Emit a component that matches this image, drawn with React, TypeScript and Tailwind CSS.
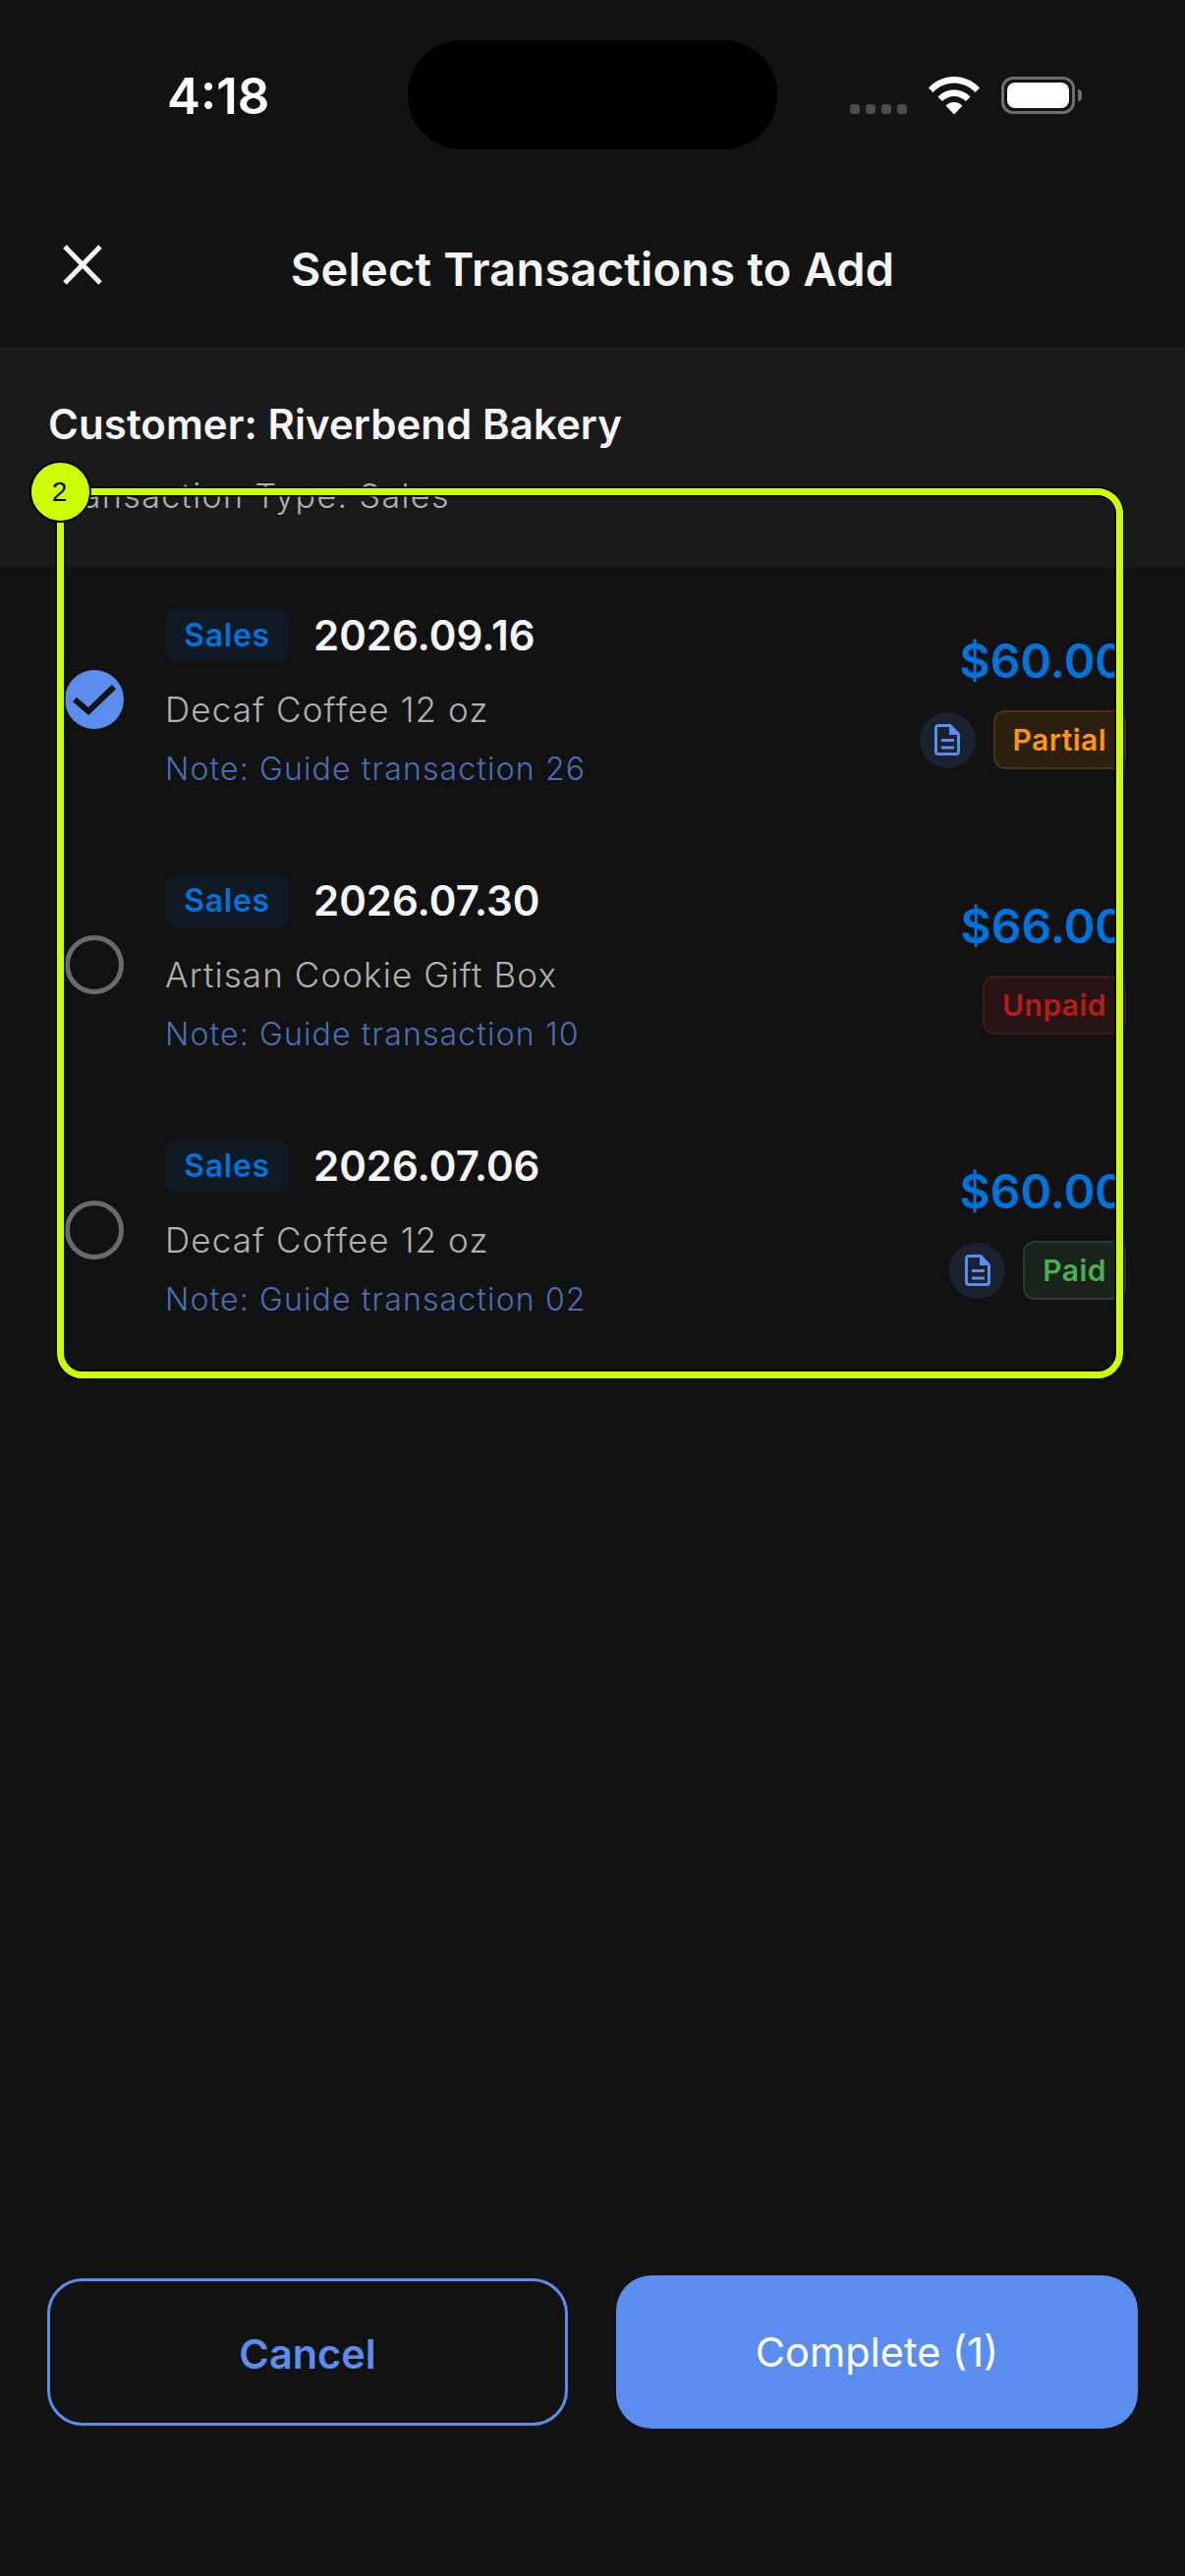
import React from "react";

const DocIcon = () => (
  <svg width="26" height="32" viewBox="0 0 26 32">
    <path d="M4 1.5H16L24.5 10.5V28A2.5 2.5 0 0 1 22 30.5H4A2.5 2.5 0 0 1 1.5 28V4A2.5 2.5 0 0 1 4 1.5Z" fill="none" stroke="#5b8def" strokeWidth="3" strokeLinejoin="round" />
    <path d="M15 1.5L24.5 11H15Z" fill="#5b8def" />
    <path d="M7 16.5H20M7 24H20" stroke="#5b8def" strokeWidth="3" />
  </svg>
);

type Row = {
  date: string;
  item: string;
  note: string;
  amount: string;
  selected?: boolean;
  doc?: boolean;
  status: string;
  statusClass: string;
};

const rows: Row[] = [
  {
    date: "2026.09.16",
    item: "Decaf Coffee 12 oz",
    note: "Note: Guide transaction 26",
    amount: "$60.00",
    selected: true,
    doc: true,
    status: "Partial",
    statusClass: "bg-[#2d2010] border-[#4a3314] text-[#ff9800]",
  },
  {
    date: "2026.07.30",
    item: "Artisan Cookie Gift Box",
    note: "Note: Guide transaction 10",
    amount: "$66.00",
    status: "Unpaid",
    statusClass: "bg-[#271414] border-[#401818] text-[#b71c1c]",
  },
  {
    date: "2026.07.06",
    item: "Decaf Coffee 12 oz",
    note: "Note: Guide transaction 02",
    amount: "$60.00",
    doc: true,
    status: "Paid",
    statusClass: "bg-[#1a241a] border-[#263d27] text-[#4caf50]",
  },
];

function TransactionRow({ r }: { r: Row }) {
  return (
    <div className="h-[270px] flex items-center pl-[66px] pr-[60px]">
      {r.selected ? (
        <div className="w-[60px] h-[60px] rounded-full bg-[#5b8def] flex items-center justify-center shrink-0">
          <svg width="60" height="60" viewBox="0 0 60 60">
            <path d="M10 30L24 42L50 17" fill="none" stroke="#121212" strokeWidth="6" />
          </svg>
        </div>
      ) : (
        <div className="w-[60px] h-[60px] rounded-full border-[5px] border-[#6b6b6b] shrink-0" />
      )}
      <div className="ml-[42px] flex flex-col flex-1 pb-[3px]">
        <div className="flex items-center gap-[25px] h-[54px]">
          <span className="h-[54px] w-[126px] rounded-[12px] bg-[#0f1a24] flex items-center justify-center text-[#0073dd] text-[32px] font-semibold tracking-[0.7px]">
            Sales
          </span>
          <span className="text-[42px] font-semibold text-[#f5f5f5] leading-[54px]">{r.date}</span>
        </div>
        <div className="mt-[24px] text-[35px] leading-[48px] font-light text-[#b0b0b0] tracking-[1.1px]">{r.item}</div>
        <div className="mt-[19px] text-[32px] leading-[36px] font-light text-[#4a6fb5] tracking-[1.15px]">{r.note}</div>
      </div>
      <div className="flex flex-col items-end pt-[2px]">
        <div className="text-[48px] leading-[60px] font-semibold text-[#0073dd]">{r.amount}</div>
        <div className="mt-[20px] flex items-center gap-[18px]">
          {r.doc && (
            <div className="w-[57px] h-[57px] rounded-full bg-[#1a2230] flex items-center justify-center">
              <DocIcon />
            </div>
          )}
          <div className={`h-[60px] px-[18px] rounded-[12px] border-2 flex items-center text-[30px] font-semibold tracking-[0.45px] ${r.statusClass}`}>
            {r.status}
          </div>
        </div>
      </div>
    </div>
  );
}

export default function App() {
  return (
    <div className="relative w-[1206px] h-[2622px] bg-[#121212] flex flex-col overflow-hidden font-['Inter',sans-serif]">
      {/* status bar */}
      <div className="h-[200px] shrink-0 flex items-start">
        <div className="ml-[170px] mt-[68px] text-[51px] leading-[60px] font-semibold text-white w-[245px]">4:18</div>
        <div className="mt-[41px] w-[376px] h-[111px] rounded-[55px] bg-black" />
        <div className="ml-[74px] mt-[78px] h-[38px] flex items-end gap-[6px]">
          {[0, 1, 2, 3].map((i) => (
            <div key={i} className="w-[10px] h-[10px] rounded-[3px] bg-[#4d4d4d]" />
          ))}
        </div>
        <svg className="ml-[22px] mt-[78px]" width="52" height="39" viewBox="0 0 52 39">
          <path d="M26 0C36 0 45 4 52 11.5L47.5 16C41.5 10 34 6.5 26 6.5S10.5 10 4.5 16L0 11.5C7 4 16 0 26 0Z" fill="#fff" />
          <path d="M26 13.5C32.5 13.5 38 16 42.5 20.5L38 25C35 22 30.5 20 26 20S17 22 14 25L9.5 20.5C14 16 19.5 13.5 26 13.5Z" fill="#fff" />
          <path d="M26 26C29 26 32 27 34.5 29.5L26 38.5L17.5 29.5C20 27 23 26 26 26Z" fill="#fff" />
        </svg>
        <div className="ml-[22px] mt-[78px] flex items-center">
          <div className="w-[75px] h-[38px] rounded-[12px] border-[3px] border-[#6e6e6e] p-[3px]">
            <div className="w-full h-full rounded-[8px] bg-white" />
          </div>
          <div className="ml-[3px] w-[4px] h-[12px] rounded-r-[4px] bg-[#6e6e6e]" />
        </div>
      </div>

      {/* header */}
      <div className="h-[153px] shrink-0 relative flex items-center justify-center pb-[6px]">
        <svg className="absolute left-[63px] top-[48px]" width="42" height="43" viewBox="0 0 42 43">
          <path d="M3 3L39 40M39 3L3 40" stroke="#f5f5f5" strokeWidth="5" />
        </svg>
        <div className="text-[47px] font-semibold text-[#f5f5f5] leading-[56px] tracking-[0.2px]">Select Transactions to Add</div>
      </div>

      {/* customer panel */}
      <div className="h-[224px] shrink-0 bg-[#1a1a1a] pl-[49px] pt-[55px]">
        <div className="text-[42px] leading-[48px] font-semibold text-[#f5f5f5] tracking-[0.05px]">Customer: Riverbend Bakery</div>
        <div className="mt-[29px] text-[34px] leading-[40px] font-light text-[#b0b0b0] tracking-[1.4px]">Transaction Type: Sales</div>
      </div>

      {/* list */}
      <div className="flex-1">
        {rows.map((r) => (
          <TransactionRow key={r.date} r={r} />
        ))}
      </div>

      {/* footer */}
      <div className="h-[306px] shrink-0 pl-[48px] pr-[48px] pb-[150px] flex items-center gap-[49px]">
        <button className="w-[530px] h-[150px] rounded-[36px] border-[3px] border-[#5b8def] text-[#5b8def] text-[41.5px] font-semibold pt-[5px]">
          Cancel
        </button>
        <button className="w-[531px] h-[156px] rounded-[36px] bg-[#5b8def] text-white text-[41.5px] font-normal">
          Complete (1)
        </button>
      </div>

      {/* annotation overlay */}
      <div className="absolute left-[58px] top-[497px] w-[1085px] h-[906px] rounded-[26px] border-[7px] border-[#ccff00] shadow-[0_0_0_1.5px_#000,inset_0_0_0_1.5px_#000]" />
      <div className="absolute left-[30px] top-[469px] w-[63px] h-[63px] rounded-full bg-[#ccff00] border-2 border-black flex items-center justify-center text-black text-[28px] pr-[2px] font-['Liberation_Sans',sans-serif]">
        2
      </div>
    </div>
  );
}
